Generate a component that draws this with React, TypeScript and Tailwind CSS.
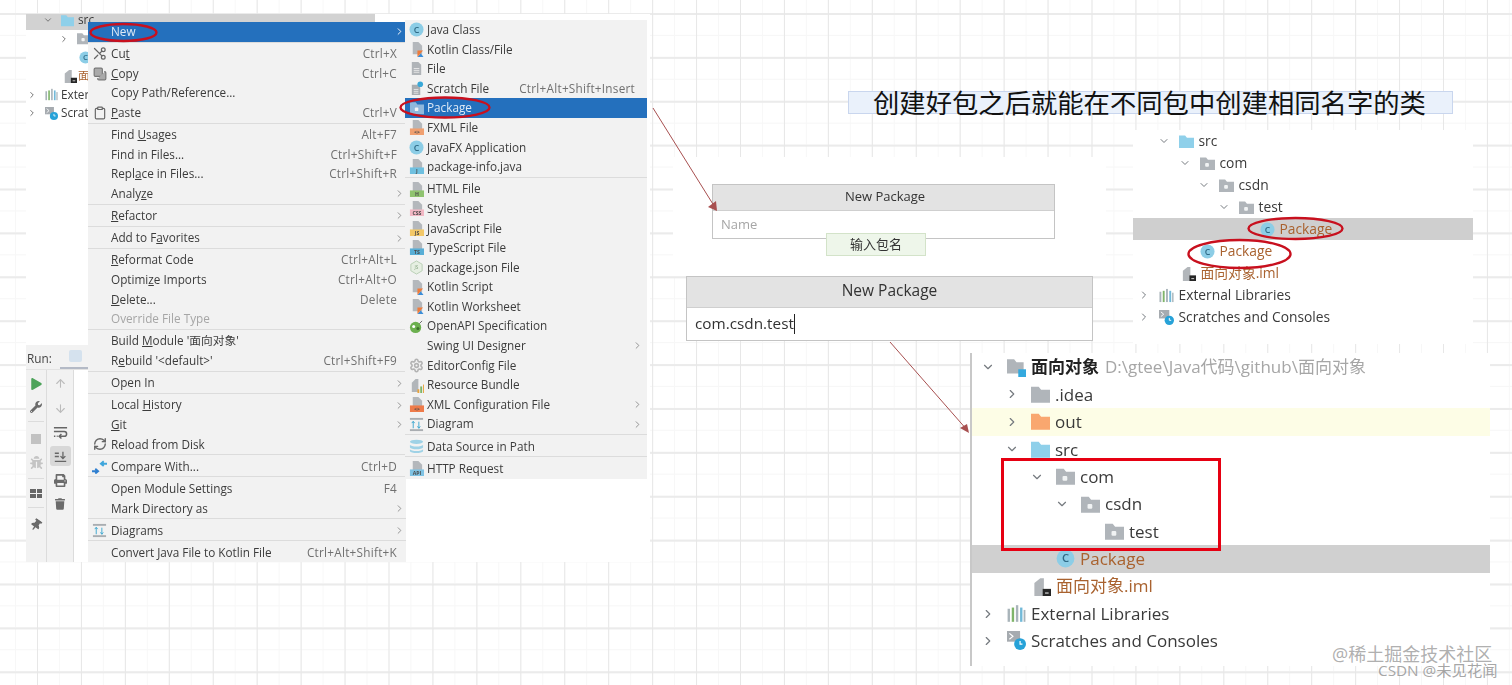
import { FC, ReactNode } from "react";
import {
  ArrowDown,
  ArrowUp,
  ChevronDown,
  ChevronRight,
  Clipboard,
  Copy,
  RefreshCw,
  Scissors,
  Settings,
} from "lucide-react";
import { FaBug, FaPlay, FaPrint, FaThumbtack, FaTrash, FaWrench } from "react-icons/fa";

const Box: FC<{ children: ReactNode; className?: string }> = ({ children, className = "w-[15px] h-[15px]" }) => (
  <svg viewBox="0 0 16 16" className={`${className} shrink-0`}>
    {children}
  </svg>
);

const ClassIcon: FC<{ className?: string }> = ({ className }) => (
  <Box className={className}>
    <circle cx="8" cy="8" r="7.5" fill="#8ccde6" />
    <text x="8" y="11.2" textAnchor="middle" fontSize="9.5" fontWeight="600" fill="#2f6a86" fontFamily="Open Sans">
      C
    </text>
  </Box>
);

const Doc = () => <path d="M4 0h6l4 4v9H4z" fill="#b4b8bc" />;

const FileIcon: FC<{ band?: string; label?: string }> = ({ band, label }) => (
  <Box>
    <Doc />
    {band && <rect x="1" y="9" width="15" height="7" fill={band} />}
    {label && (
      <text x="8.5" y="14.8" textAnchor="middle" fontSize="5.5" fontWeight="700" fill="#4a4a4a" fontFamily="Open Sans">
        {label}
      </text>
    )}
  </Box>
);

const KotlinIcon = () => (
  <Box>
    <Doc />
    <path d="M9 16l3.5-4 3 4z" fill="#3c8ed8" />
    <path d="M9 9h6l-6 7z" fill="#ef7b3a" />
  </Box>
);

const ScratchFile = () => (
  <Box>
    <path d="M3 4h6l3 3v8H3z" fill="#a9adb1" />
    <path d="M5 9h5M5 11h5M5 13h5" stroke="#e5e5e5" />
    <circle cx="12" cy="3.5" r="3" fill="#38a8d8" />
  </Box>
);

const PlainFile = () => (
  <Box>
    <path d="M3 1h7l3 3v11H3z" fill="#b0b4b8" />
    <path d="M5 8h6M5 10h6M5 12h6" stroke="#e8e8e8" />
  </Box>
);

const Folder: FC<{ color?: string; dot?: boolean; className?: string }> = ({ color = "#b0b5ba", dot, className }) => (
  <Box className={className}>
    <path d="M0 1.5h6.5L8.5 4H16v11H0z" fill={color} />
    {dot && <rect x="5.5" y="7.5" width="4" height="4" rx="1" fill="#f1f3f4" />}
  </Box>
);

const LibIcon: FC<{ className?: string }> = ({ className }) => (
  <Box className={className}>
    <rect x="0.5" y="4" width="2" height="11" fill="#a9b4ba" />
    <rect x="4" y="3" width="2" height="12" fill="#7fb56a" />
    <rect x="7.5" y="1" width="2" height="14" fill="#a9b4ba" />
    <rect x="11" y="3" width="2" height="12" fill="#72b9d8" />
    <rect x="14" y="5" width="1.5" height="10" fill="#a9b4ba" />
  </Box>
);

const ScratchIcon: FC<{ className?: string }> = ({ className }) => (
  <Box className={className}>
    <path d="M0 0h11v9H0z" fill="#a6abb0" />
    <path d="M2 2l3 2.5L2 7" stroke="#fff" fill="none" />
    <circle cx="11" cy="11" r="5" fill="#27a2d8" />
    <path d="M11 8.5V11h2" stroke="#fff" fill="none" />
  </Box>
);

const ImlIcon: FC<{ className?: string }> = ({ className }) => (
  <Box className={className}>
    <path d="M2 5l5-4h3v15H2z" fill="#b2b6ba" />
    <rect x="9" y="10" width="7" height="6" fill="#262626" />
    <rect x="11" y="13" width="3" height="1" fill="#ddd" />
  </Box>
);

const ProjectIcon: FC<{ className?: string }> = ({ className }) => (
  <Box className={className}>
    <path d="M0 1h6l2 2.5h6V13H0z" fill="#b0b5ba" />
    <rect x="9.5" y="9.5" width="6.5" height="6.5" fill="#34a9de" />
  </Box>
);

const DiagramIcon = () => (
  <Box>
    <rect x="1" y="1" width="14" height="2" fill="#a9adb1" />
    <rect x="1" y="13" width="14" height="2" fill="#a9adb1" />
    <path d="M4.5 12V5M3 6.5l1.5-2 1.5 2M10.5 5v7M9 10l1.5 2 1.5-2" stroke="#3ba6cf" fill="none" />
  </Box>
);

const menuIcons: Record<string, ReactNode> = {
  cut: <Scissors className="w-[15px] h-[15px] text-[#666] -scale-x-100" strokeWidth={2} />,
  copy: <Copy className="w-[14px] h-[14px] text-[#777] -scale-100 fill-[#aaa]" strokeWidth={2} />,
  paste: <Clipboard className="w-[14px] h-[14px] text-[#666]" strokeWidth={2} />,
  reload: <RefreshCw className="w-[14px] h-[14px] text-[#666]" strokeWidth={2.4} />,
  compare: (
    <Box>
      <path d="M0 13h6M3.5 10.5L6.5 13l-3 2.5" stroke="#2f7fd0" strokeWidth="2" fill="none" />
      <path d="M16 5h-6M12.5 2.5L9.5 5l3 2.5" stroke="#3fa6dc" strokeWidth="2" fill="none" />
    </Box>
  ),
  diagram: <DiagramIcon />,
  java: <ClassIcon className="w-[15px] h-[15px]" />,
  kotlin: <KotlinIcon />,
  file: <PlainFile />,
  scratch: <ScratchFile />,
  pkg: <Folder color="#8fb8dc" dot className="w-[14px] h-[14px]" />,
  fxml: <FileIcon band="#f0a070" label="<>" />,
  info: <FileIcon band="#6fc0e0" label="J" />,
  html: <FileIcon band="#8fc36f" label="H" />,
  css: <FileIcon band="#f2b8c4" label="CSS" />,
  js: <FileIcon band="#f3c868" label="JS" />,
  ts: <FileIcon band="#58aed6" label="TS" />,
  json: (
    <Box>
      <path d="M8 1l6 3.5v7L8 15l-6-3.5v-7z" fill="#e6efe2" stroke="#b9cfb4" />
      <text x="8" y="10" textAnchor="middle" fontSize="5" fill="#8aa886" fontFamily="Open Sans">
        JS
      </text>
    </Box>
  ),
  openapi: (
    <Box>
      <circle cx="7" cy="9" r="6" fill="#6cb04f" />
      <circle cx="5" cy="8" r="1.6" fill="#fff" />
      <circle cx="9.5" cy="10" r="1.6" fill="#3d6f2c" />
      <path d="M11 5l3-3" stroke="#666" />
    </Box>
  ),
  editor: <Settings className="w-[15px] h-[15px] text-[#b3b3b3]" strokeWidth={2.6} />,
  bundle: (
    <Box>
      <path d="M3 5l4-4h3v14H3z" fill="#b2b6ba" />
      <rect x="9" y="12" width="2" height="4" fill="#e8a33c" />
      <rect x="12" y="9" width="2" height="7" fill="#7fb56a" />
      <rect x="15" y="7" width="1" height="9" fill="#e8a33c" />
    </Box>
  ),
  xml: <FileIcon band="#ee7b4a" label="<>" />,
  data: (
    <Box>
      <ellipse cx="8" cy="3" rx="7" ry="2.3" fill="#9fd2e6" />
      <path d="M1 6c1 2.5 13 2.5 14 0v3c-1 2.5-13 2.5-14 0zM1 11c1 2.5 13 2.5 14 0v2c-1 2.5-13 2.5-14 0z" fill="#9fd2e6" />
    </Box>
  ),
  http: <FileIcon band="#7fc3e4" label="API" />,
};

type Item = { label: string; keys?: string; arrow?: boolean; icon?: string; sep?: boolean; off?: boolean; active?: boolean };

const mainMenu: Item[] = [
  { label: "New", arrow: true, active: true, sep: true },
  { label: "Cu_t", keys: "Ctrl+X", icon: "cut" },
  { label: "_Copy", keys: "Ctrl+C", icon: "copy" },
  { label: "Copy Path/Reference..." },
  { label: "_Paste", keys: "Ctrl+V", icon: "paste", sep: true },
  { label: "Find _Usages", keys: "Alt+F7" },
  { label: "Find in Files...", keys: "Ctrl+Shift+F" },
  { label: "Repl_ace in Files...", keys: "Ctrl+Shift+R" },
  { label: "Analy_ze", arrow: true, sep: true },
  { label: "_Refactor", arrow: true, sep: true },
  { label: "Add to F_avorites", arrow: true, sep: true },
  { label: "_Reformat Code", keys: "Ctrl+Alt+L" },
  { label: "Optimi_ze Imports", keys: "Ctrl+Alt+O" },
  { label: "_Delete...", keys: "Delete" },
  { label: "Override File Type", off: true, sep: true },
  { label: "Build _Module '面向对象'" },
  { label: "R_ebuild '<default>'", keys: "Ctrl+Shift+F9", sep: true },
  { label: "Open In", arrow: true, sep: true },
  { label: "Local _History", arrow: true },
  { label: "_Git", arrow: true },
  { label: "Reload from Disk", icon: "reload", sep: true },
  { label: "Compare With...", keys: "Ctrl+D", icon: "compare", sep: true },
  { label: "Open Module Settings", keys: "F4" },
  { label: "Mark Directory as", arrow: true, sep: true },
  { label: "Diagrams", arrow: true, icon: "diagram", sep: true },
  { label: "Convert Java File to Kotlin File", keys: "Ctrl+Alt+Shift+K" },
];

const newMenu: Item[] = [
  { label: "Java Class", icon: "java" },
  { label: "Kotlin Class/File", icon: "kotlin" },
  { label: "File", icon: "file" },
  { label: "Scratch File", keys: "Ctrl+Alt+Shift+Insert", icon: "scratch" },
  { label: "Package", icon: "pkg", active: true },
  { label: "FXML File", icon: "fxml" },
  { label: "JavaFX Application", icon: "java" },
  { label: "package-info.java", icon: "info", sep: true },
  { label: "HTML File", icon: "html" },
  { label: "Stylesheet", icon: "css" },
  { label: "JavaScript File", icon: "js" },
  { label: "TypeScript File", icon: "ts" },
  { label: "package.json File", icon: "json" },
  { label: "Kotlin Script", icon: "kotlin" },
  { label: "Kotlin Worksheet", icon: "kotlin" },
  { label: "OpenAPI Specification", icon: "openapi" },
  { label: "Swing UI Designer", arrow: true },
  { label: "EditorConfig File", icon: "editor" },
  { label: "Resource Bundle", icon: "bundle" },
  { label: "XML Configuration File", arrow: true, icon: "xml" },
  { label: "Diagram", arrow: true, icon: "diagram", sep: true },
  { label: "Data Source in Path", icon: "data", sep: true },
  { label: "HTTP Request", icon: "http" },
];

const Mnemonic: FC<{ text: string }> = ({ text }) => {
  const [head, tail] = text.split("_");
  if (tail === undefined) return <>{text}</>;
  return (
    <>
      {head}
      <u>{tail[0]}</u>
      {tail.slice(1)}
    </>
  );
};

const Menu: FC<{ items: Item[]; gap: string; right: string }> = ({ items, gap, right }) => (
  <>
    {items.map((item) => (
      <div key={item.label}>
        <div
          className={`flex h-[19.6px] items-center pl-1 ${right} ${
            item.active ? "bg-[#2470bd] text-[#dfeaf6]" : item.off ? "text-[#a6a6a6]" : "text-[#3c3c3c]"
          }`}
        >
          <span className={`flex w-[15px] justify-center shrink-0 ${gap}`}>{item.icon && menuIcons[item.icon]}</span>
          <span className="flex-1 whitespace-nowrap">
            <Mnemonic text={item.label} />
          </span>
          {item.keys && <span className="text-[#707070] whitespace-nowrap tracking-[0.25px]">{item.keys}</span>}
          {item.arrow && <ChevronRight className={`w-[11px] h-[11px] -mr-[8px] ${item.active ? "text-white" : "text-[#8c8c8c]"}`} />}
        </div>
        {item.sep && <div className="h-[2.6px] border-t border-[#dcdcdc]" />}
      </div>
    ))}
  </>
);

type Row = {
  pad: string;
  open?: boolean;
  shut?: boolean;
  icon: (cls: string) => ReactNode;
  text: ReactNode;
  tone?: string;
  band?: string;
};

const pkg = (cls: string) => <Folder dot className={cls} />;
const cls = (c: string) => <ClassIcon className={c} />;
const iml = (c: string) => <ImlIcon className={c} />;
const libs = (c: string) => <LibIcon className={c} />;
const scratch = (c: string) => <ScratchIcon className={c} />;
const BROWN = "text-[#a9622f]";

const smallTree: Row[] = [
  { pad: "pl-[25px]", open: true, icon: (c) => <Folder color="#8fd0ea" className={c} />, text: "src" },
  { pad: "pl-[46px]", open: true, icon: pkg, text: "com" },
  { pad: "pl-[65px]", open: true, icon: pkg, text: "csdn" },
  { pad: "pl-[85px]", open: true, icon: pkg, text: "test" },
  { pad: "pl-[106px]", icon: cls, text: "Package", tone: BROWN, band: "bg-[#cfcfcf]" },
  { pad: "pl-[46px]", icon: cls, text: "Package", tone: BROWN },
  { pad: "pl-[27px]", icon: iml, text: "面向对象.iml", tone: BROWN },
  { pad: "pl-[5px]", shut: true, icon: libs, text: "External Libraries" },
  { pad: "pl-[5px]", shut: true, icon: scratch, text: "Scratches and Consoles" },
];

const bigTree: Row[] = [
  {
    pad: "pl-[9px]",
    open: true,
    icon: (c) => <ProjectIcon className={c} />,
    text: (
      <>
        <b className="font-semibold text-[#222]">面向对象</b>
        <span className="ml-[6px] text-[#a6a6a6] text-[17px]">D:\gtee\Java代码\github\面向对象</span>
      </>
    ),
  },
  { pad: "pl-[33px]", shut: true, icon: (c) => <Folder className={c} />, text: ".idea" },
  { pad: "pl-[33px]", shut: true, icon: (c) => <Folder color="#f9a76f" className={c} />, text: "out", band: "bg-[#fdfde6]" },
  { pad: "pl-[33px]", open: true, icon: (c) => <Folder color="#8fd0ea" className={c} />, text: "src" },
  { pad: "pl-[58px]", open: true, icon: pkg, text: "com" },
  { pad: "pl-[83px]", open: true, icon: pkg, text: "csdn" },
  { pad: "pl-[107px]", icon: pkg, text: "test" },
  { pad: "pl-[58px]", icon: cls, text: "Package", tone: BROWN, band: "bg-[#d0d0d0]" },
  { pad: "pl-[34px]", icon: iml, text: "面向对象.iml", tone: BROWN },
  { pad: "pl-[9px]", shut: true, icon: libs, text: "External Libraries" },
  { pad: "pl-[9px]", shut: true, icon: scratch, text: "Scratches and Consoles" },
];

const Tree: FC<{ rows: Row[]; height: string; chev: string; slot: string; iconCls: string; textGap: string }> = ({
  rows,
  height,
  chev,
  slot,
  iconCls,
  textGap,
}) => (
  <>
    {rows.map((row, i) => (
      <div key={i} className={`flex items-center ${height} ${row.pad} ${row.band ?? ""} ${row.tone ?? "text-[#3a3a3a]"}`}>
        <span className={`flex justify-center shrink-0 text-[#757a7f] ${chev} ${slot}`}>
          {row.open && <ChevronDown className={chev} strokeWidth={2} />}
          {row.shut && <ChevronRight className={chev} strokeWidth={2} />}
        </span>
        {row.icon(iconCls)}
        <span className={`whitespace-nowrap ${textGap}`}>{row.text}</span>
      </div>
    ))}
  </>
);

const IdeShot = () => (
  <div className="absolute left-[26px] top-[14px] w-[624px] h-[548px] overflow-hidden bg-white blur-[0.4px] text-[11.75px]">
    <div className="h-[334px] -mt-[3px] overflow-hidden text-[#3a3a3a]">
      <div className="flex items-center h-[18.6px] w-[349px] pl-[17px] bg-[#d2d2d2]">
        <ChevronDown className="w-[10px] h-[10px] mr-[8px] text-[#777]" strokeWidth={2.4} />
        <Folder color="#8fd0ea" className="w-[13px] h-[13px]" />
        <span className="ml-[4px]">src</span>
      </div>
      <div className="flex items-center h-[18.6px] pl-[33px]">
        <ChevronRight className="w-[10px] h-[10px] mr-[8px] text-[#777]" strokeWidth={2.4} />
        <Folder dot className="w-[13px] h-[13px]" />
      </div>
      <div className="flex items-center h-[18.6px] pl-[53px]">
        <ClassIcon className="w-[13px] h-[13px]" />
      </div>
      <div className="flex items-center h-[18.6px] pl-[37px]">
        <ImlIcon className="w-[14px] h-[14px]" />
        <span className="ml-[1px] text-[#a9622f]">面向对象.iml</span>
      </div>
      <div className="flex items-center h-[18.6px]">
        <ChevronRight className="w-[10px] h-[10px] mr-[8px] ml-[1px] text-[#777]" strokeWidth={2.4} />
        <LibIcon className="w-[13px] h-[13px]" />
        <span className="ml-[3px]">External Libraries</span>
      </div>
      <div className="flex items-center h-[18.6px]">
        <ChevronRight className="w-[10px] h-[10px] mr-[8px] ml-[1px] text-[#777]" strokeWidth={2.4} />
        <ScratchIcon className="w-[13px] h-[13px]" />
        <span className="ml-[3px]">Scratches and Consoles</span>
      </div>
    </div>

    <div className="w-[80px] h-[217px] bg-[#f2f2f2]">
      <div className="flex items-stretch h-[25px] border-b border-[#e3e3e3] text-[#444]">
        <span className="ml-[1px] self-center pt-[3px]">Run:</span>
        <span className="flex items-center ml-[8px] w-[32px] pl-[9px] border-b-2 border-[#b4bac6]">
          <span className="w-[13px] h-[12px] rounded-[2px] bg-[#d5e2ee]" />
        </span>
      </div>
      <div className="flex h-[192px]">
        <div className="flex w-[21px] flex-col items-center border-r border-[#dcdcdc] pt-[8px] text-[#6b6b6b]">
          <FaPlay className="w-[11px] h-[12px] text-[#4da35a]" />
          <FaWrench className="w-[12px] h-[12px] mt-[11px]" />
          <div className="w-[16px] border-t border-[#dcdcdc] mt-[8px]" />
          <span className="w-[10px] h-[10px] bg-[#c2c2c2] mt-[12px]" />
          <FaBug className="w-[13px] h-[13px] mt-[12px] text-[#c4c4c4]" />
          <div className="w-[16px] border-t border-[#dcdcdc] mt-[9px]" />
          <span className="grid grid-cols-2 gap-[1px] w-[12px] mt-[10px]">
            <i className="h-[4px] bg-[#666]" />
            <i className="h-[4px] bg-[#666]" />
            <i className="h-[4px] bg-[#666]" />
            <i className="h-[4px] bg-[#666]" />
          </span>
          <div className="w-[16px] border-t border-[#dcdcdc] mt-[9px]" />
          <FaThumbtack className="w-[12px] h-[12px] mt-[11px] rotate-[35deg]" />
        </div>
        <div className="flex w-[27px] flex-col items-center border-r border-[#dcdcdc] pt-[7px] text-[#6b6b6b]">
          <ArrowUp className="w-[13px] h-[13px] text-[#bbb]" />
          <ArrowDown className="w-[13px] h-[13px] mt-[12px] text-[#bbb]" />
          <svg viewBox="0 0 16 16" className="w-[15px] h-[15px] mt-[10px]" fill="none" stroke="#666" strokeWidth="1.6">
            <path d="M1 3h14M1 7h11a2.5 2.5 0 010 5H7M9 9.5L6.5 12 9 14.5M1 12h1.5M4 12h1" />
          </svg>
          <span className="flex items-center justify-center w-[21px] h-[20px] mt-[6px] rounded-[3px] bg-[#d8d8d8]">
            <svg viewBox="0 0 16 16" className="w-[13px] h-[13px]" fill="none" stroke="#666" strokeWidth="1.6">
              <path d="M1 4h5M1 8h5M1 14h14M11 2v8M8 7.5l3 3 3-3" />
            </svg>
          </span>
          <FaPrint className="w-[13px] h-[13px] mt-[8px]" />
          <FaTrash className="w-[10px] h-[12px] mt-[11px]" />
        </div>
        <div className="flex-1 bg-white" />
      </div>
    </div>

    <div className="absolute left-[62px] top-[8px] w-[318px] h-[540px] overflow-hidden bg-[#f2f2f2]">
      <Menu items={mainMenu} gap="mr-[4px]" right="pr-[9px]" />
    </div>
    <div className="absolute left-[379px] top-[6px] w-[242px] h-[458.5px] bg-[#f2f2f2]">
      <Menu items={newMenu} gap="mr-[3px]" right="pr-[12px]" />
    </div>
  </div>
);

const Dialog: FC<{ wrap: string; head: string; title: string; children: ReactNode }> = ({ wrap, head, title, children }) => (
  <div className={`absolute flex flex-col border border-[#c4c4c4] bg-white blur-[0.3px] ${wrap}`}>
    <div className={`flex items-center justify-center bg-[#e3e3e3] border-b border-[#cfcfcf] text-[#333] ${head}`}>{title}</div>
    {children}
  </div>
);

const Overlay = () => (
  <svg viewBox="0 0 1512 685" className="absolute inset-0 w-[1512px] h-[685px] pointer-events-none" fill="none">
    <path d="M653 108L716 209" stroke="#a85050" />
    <path d="M708 207l9 4-1-10z" fill="#a85050" />
    <path d="M890 342L968 431" stroke="#a85050" />
    <path d="M960 428l9 5-2-9z" fill="#a85050" />
    <g stroke="#c8101e" strokeWidth="2.4">
      <ellipse cx="123.5" cy="32.5" rx="33" ry="8.5" />
      <ellipse cx="445" cy="107.5" rx="44.5" ry="10" />
      <ellipse cx="1295.5" cy="228.5" rx="47" ry="10.5" />
      <ellipse cx="1239.5" cy="254" rx="51" ry="14" />
    </g>
  </svg>
);

export default function App() {
  return (
    <div className="relative w-[1512px] h-[685px] overflow-hidden bg-white font-['Open_Sans','Noto_Sans_CJK_SC',sans-serif] bg-[linear-gradient(to_right,#e7e7e7_1px,transparent_1px),linear-gradient(to_bottom,#ebebeb_2px,transparent_2px),linear-gradient(to_right,#f7f7f7_1px,transparent_1px),linear-gradient(to_bottom,#f6f6f6_1px,transparent_1px)] bg-size-[43.95px_43.95px,43.9px_43.9px,21.97px_21.97px,21.95px_21.95px] bg-position-[37px_0,0_13px,15px_0,0_13px]">
      <IdeShot />

      <div className="absolute left-[673px] top-[157px] w-[433px] h-[119px] bg-white" />
      <div className="absolute left-[1133px] top-[130px] w-[340px] h-[214px] bg-white blur-[0.4px] text-[13.8px]">
        <Tree rows={smallTree} height="h-[22px]" chev="w-[12px] h-[12px]" slot="mr-[9px]" iconCls="w-[15px] h-[15px]" textGap="ml-[4.5px]" />
      </div>
      <div className="absolute left-[970px] top-[353.4px] w-[520px] h-[313px] bg-white border-l-2 border-[#c8c8c8] blur-[0.4px] text-[17px]">
        <Tree rows={bigTree} height="h-[27.4px]" chev="w-[14px] h-[14px]" slot="mr-[12px]" iconCls="w-[19px] h-[19px]" textGap="ml-[5px]" />
      </div>

      <div className="absolute left-[848px] top-[91px] w-[605px] h-[23px] bg-[#eaf1fb] border border-[#c9d6ee]" />
      <div className="absolute left-[873px] top-[84px] text-[26.33px] leading-[38px] whitespace-nowrap text-[#111]">
        创建好包之后就能在不同包中创建相同名字的类
      </div>

      <Dialog wrap="left-[712px] top-[184px] w-[343px] h-[55px]" head="h-[26px] pl-[3px] pb-[1px] text-[13px]" title="New Package">
        <div className="flex flex-1 items-center pl-[8px] text-[13px] text-[#a6a6a6]">Name</div>
      </Dialog>
      <div className="absolute left-[826px] top-[233px] flex w-[100px] h-[23px] items-center justify-center border border-[#d3e3c9] bg-[#eef6ea] text-[13px] text-[#333] blur-[0.3px]">
        输入包名
      </div>
      <Dialog wrap="left-[686px] top-[276px] w-[407px] h-[65px]" head="h-[31px] pb-[3px] text-[15.5px]" title="New Package">
        <div className="flex flex-1 items-center pl-[8px] pb-[1px] text-[15.3px] text-[#333]">
          com.csdn.test<span className="w-[1px] h-[20px] bg-[#222]" />
        </div>
      </Dialog>

      <div className="absolute left-[1001px] top-[458px] w-[220px] h-[93px] border-[3px] border-[#e60012]" />
      <Overlay />

      <div className="absolute left-[1332px] top-[641px] text-[18px] leading-[26px] whitespace-nowrap text-[#9a9a9a]/80">
        @稀土掘金技术社区
      </div>
      <div className="absolute left-[1378px] top-[659px] text-[15.3px] leading-[22px] whitespace-nowrap text-[#8f8f8f]/80">
        CSDN @未见花闻
      </div>
    </div>
  );
}
